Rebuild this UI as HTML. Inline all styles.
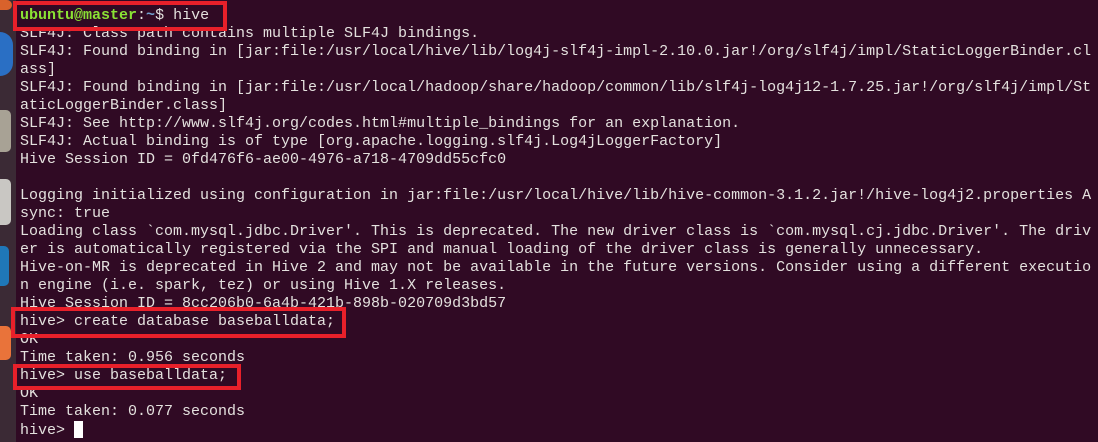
<!DOCTYPE html>
<html><head><meta charset="utf-8"><style>
html,body{margin:0;padding:0}
body{width:1098px;height:442px;overflow:hidden;background:#300a24;position:relative;font-family:"Liberation Mono",monospace}
#dock{position:absolute;left:0;top:0;width:16px;height:442px;background:#3b2a35}
.ic{position:absolute;left:0;border-radius:0 5px 5px 0}
#term{position:absolute;left:20px;top:7px;font-size:15px;line-height:18px;color:#e4e1de;white-space:pre;letter-spacing:0px}
.g{color:#8ae234;font-weight:bold}.b{color:#729fcf;font-weight:bold}
.box{position:absolute;border:4px solid #e8202a;box-sizing:border-box}
.cur{display:inline-block;width:9px;height:17px;background:#fff;vertical-align:-4px}
</style></head><body>
<div id="dock">
<div class="ic" style="top:0;height:10px;width:12px;background:#d9622b"></div>
<div class="ic" style="top:32px;height:44px;width:13px;background:#2a6fc4;border-radius:0 22px 22px 0"></div>
<div class="ic" style="top:110px;height:42px;width:11px;background:#a8a295"></div>
<div class="ic" style="top:179px;height:46px;width:11px;background:#c9c7c3"></div>
<div class="ic" style="top:246px;height:40px;width:9px;background:#1f77b8"></div>
<div class="ic" style="top:326px;height:34px;width:11px;background:#e9733a"></div>
</div>
<div id="term"><span class="g">ubuntu@master</span>:<span class="b">~</span>$ hive
SLF4J: Class path contains multiple SLF4J bindings.
SLF4J: Found binding in [jar:file:/usr/local/hive/lib/log4j-slf4j-impl-2.10.0.jar!/org/slf4j/impl/StaticLoggerBinder.cl
ass]
SLF4J: Found binding in [jar:file:/usr/local/hadoop/share/hadoop/common/lib/slf4j-log4j12-1.7.25.jar!/org/slf4j/impl/St
aticLoggerBinder.class]
SLF4J: See http://www.slf4j.org/codes.html#multiple_bindings for an explanation.
SLF4J: Actual binding is of type [org.apache.logging.slf4j.Log4jLoggerFactory]
Hive Session ID = 0fd476f6-ae00-4976-a718-4709dd55cfc0

Logging initialized using configuration in jar:file:/usr/local/hive/lib/hive-common-3.1.2.jar!/hive-log4j2.properties A
sync: true
Loading class `com.mysql.jdbc.Driver'. This is deprecated. The new driver class is `com.mysql.cj.jdbc.Driver'. The driv
er is automatically registered via the SPI and manual loading of the driver class is generally unnecessary.
Hive-on-MR is deprecated in Hive 2 and may not be available in the future versions. Consider using a different executio
n engine (i.e. spark, tez) or using Hive 1.X releases.
Hive Session ID = 8cc206b0-6a4b-421b-898b-020709d3bd57
hive&gt; create database baseballdata;
OK
Time taken: 0.956 seconds
hive&gt; use baseballdata;
OK
Time taken: 0.077 seconds
hive&gt; <span class="cur"></span></div>
<div class="box" style="left:13px;top:1px;width:214px;height:30px"></div>
<div class="box" style="left:11px;top:307px;width:335px;height:31px"></div>
<div class="box" style="left:13px;top:364px;width:228px;height:26px"></div>
</body></html>
